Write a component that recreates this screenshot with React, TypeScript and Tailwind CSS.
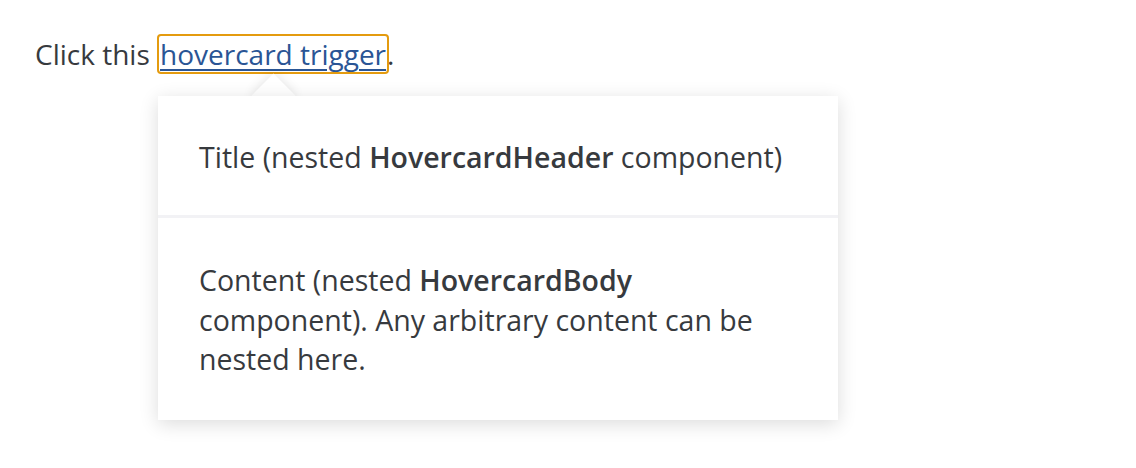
import React from "react";

export default function App() {
  return (
    <div
      className="relative h-[468px] w-[1136px] bg-white text-[#373a3e]"
      style={{ fontFamily: '"Open Sans", "Noto Sans", sans-serif' }}
    >
      <div className="pl-[35px] pt-[34px] text-[28px] leading-[40px]">
        Click this{" "}
        <a
          href="#"
          className="ml-[2px] inline-block rounded-[2px] px-[1px] leading-[36px] text-[#2a5595] underline decoration-[2px] underline-offset-[4px] outline-2 outline-[#e49b0f]"
        >
          hovercard trigger
        </a>
        .
      </div>

      <div className="absolute left-[158px] top-[96px] w-[680px]">
        <div className="absolute left-[100px] top-[-16px] h-[31px] w-[31px] rotate-45 bg-white shadow-[0_0_12px_rgba(0,0,0,0.12)]" />
        <div className="relative bg-white shadow-[0_4px_18px_rgba(0,0,0,0.14)]">
          <div className="px-[41px] pb-[38px] pt-[42px] text-[28.5px] leading-[39px]">
            Title (nested <b className="font-semibold">HovercardHeader</b> component)
          </div>
          <div className="h-[3px] bg-[#f2f2f5]" />
          <div className="px-[41px] pb-[40px] pt-[43px] text-[28.5px] leading-[39.5px]">
            Content (nested <b className="font-semibold">HovercardBody</b> component). Any arbitrary content can be nested here.
          </div>
        </div>
      </div>
    </div>
  );
}
